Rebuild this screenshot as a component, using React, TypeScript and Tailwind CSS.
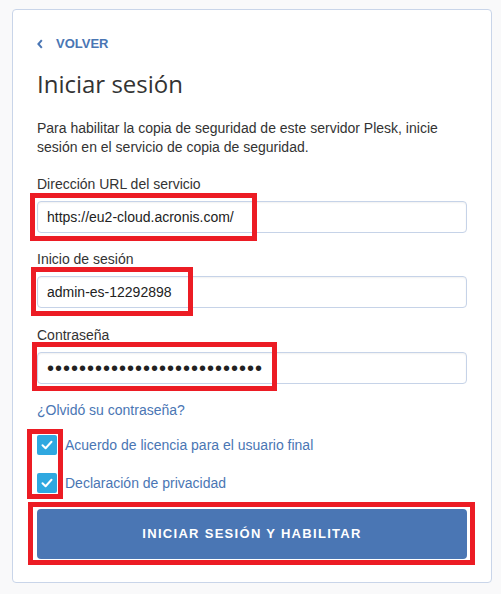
import React from "react";

const arial = "font-['Liberation_Sans',Arial,sans-serif]";

const RedBox: React.FC<{ className: string }> = ({ className }) => (
  <div className={`pointer-events-none absolute border-[5px] border-[#ec1c24] ${className}`} />
);

const CheckBox: React.FC = () => (
  <span className="flex h-[20px] w-[20px] shrink-0 items-center justify-center rounded-[2px] bg-[#2fa8e0]">
    <svg width="14" height="14" viewBox="0 0 14 14" fill="none">
      <path d="M2.5 7.2 L5.6 10.2 L11.5 3.8" stroke="#fff" strokeWidth="2" strokeLinecap="round" strokeLinejoin="round" />
    </svg>
  </span>
);

const Field: React.FC<{ label: string; children: React.ReactNode; className?: string }> = ({
  label,
  children,
  className = "",
}) => (
  <div className={className}>
    <label className="block h-[18px] text-[14px] leading-[18px] text-[#333]">{label}</label>
    <div className="mt-[8px] flex h-[32px] items-center rounded-[4px] border border-[#c6d3e8] bg-white px-[9px] text-[14px] text-[#222] shadow-[inset_0_1px_2px_rgba(0,0,0,0.06)]">
      {children}
    </div>
  </div>
);

export default function App() {
  return (
    <div className={`min-h-[594px] bg-[#f9f9fa] px-[12px] pt-[9px] ${arial}`}>
      <div className="relative w-[480px] rounded-[4px] border border-[#c9d5e9] bg-white px-[24px] pt-[25px] pb-[23px]">
        <a href="#" className="flex h-[18px] items-center text-[13px] font-bold leading-[18px] text-[#4a76b4]">
          <svg width="6" height="10" viewBox="0 0 6 10" fill="none">
            <path d="M4.8 1.2 L1.4 5 L4.8 8.8" stroke="#4a76b4" strokeWidth="2" />
          </svg>
          <span className="ml-[13px]">VOLVER</span>
        </a>

        <h1 className="mt-[15px] h-[32px] font-['Open_Sans',sans-serif] text-[24px] leading-[32px] font-normal text-[#333]">
          Iniciar sesión
        </h1>

        <p className="mt-[19px] text-[14px] leading-[19px] text-[#333]">
          Para habilitar la copia de seguridad de este servidor Plesk, inicie sesión en el servicio de copia de seguridad.
        </p>

        <div className="relative">
          <Field label="Dirección URL del servicio" className="mt-[18px]">
            https://eu2-cloud.acronis.com/
          </Field>
          <RedBox className="left-[-7px] top-[18px] h-[48px] w-[227px]" />
        </div>

        <div className="relative">
          <Field label="Inicio de sesión" className="mt-[17px]">
            admin-es-12292898
          </Field>
          <RedBox className="left-[-6px] top-[17px] h-[49px] w-[162px]" />
        </div>

        <div className="relative">
          <Field label="Contraseña" className="mt-[18px]">
            <span className="text-[20px] leading-[20px] tracking-[1px] text-[#222]">
              {"•".repeat(27)}
            </span>
          </Field>
          <RedBox className="left-[-5px] top-[16px] h-[49px] w-[245px]" />
        </div>

        <a href="#" className="mt-[17px] block h-[18px] text-[14px] leading-[18px] text-[#4a76b4]">
          ¿Olvidó su contraseña?
        </a>

        <div className="relative mt-[16px]">
          <label className="flex h-[20px] items-center gap-[8px] text-[14px] text-[#4a76b4]">
            <CheckBox />
            <span className="pt-[1px]">Acuerdo de licencia para el usuario final</span>
          </label>
          <label className="mt-[18px] flex h-[20px] items-center gap-[8px] text-[14px] text-[#4a76b4]">
            <CheckBox />
            <span className="pt-[1px]">Declaración de privacidad</span>
          </label>
          <RedBox className="left-[-10px] top-[-6px] h-[70px] w-[36px]" />
        </div>

        <div className="relative mt-[16px]">
          <button
            type="button"
            className="flex h-[50px] w-full items-center justify-center rounded-[4px] bg-[#4a76b4] text-[13px] font-bold tracking-[1.3px] text-white"
          >
            INICIAR SESIÓN Y HABILITAR
          </button>
          <RedBox className="left-[-9px] top-[-7px] h-[63px] w-[447px]" />
        </div>
      </div>
    </div>
  );
}
